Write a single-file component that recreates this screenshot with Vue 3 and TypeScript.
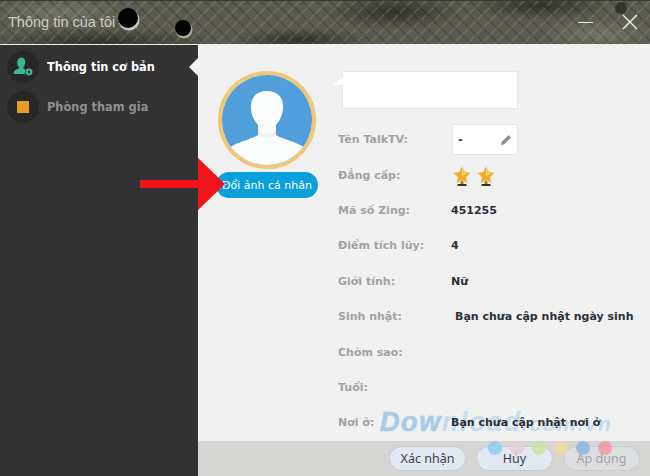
<template>
  <div class="win">
    <header class="titlebar">
      <svg class="plate" width="650" height="44" aria-hidden="true">
        <defs>
          <pattern id="tread" width="14" height="14" patternUnits="userSpaceOnUse">
            <path d="M1 6 L6 1 M8 13 L13 8" stroke="#a8a898" stroke-width="1.1" opacity=".3" />
            <path d="M8 1 L13 6 M1 8 L6 13" stroke="#22221d" stroke-width="1.1" opacity=".36" />
          </pattern>
          <radialGradient id="grime" cx=".5" cy=".5" r=".5">
            <stop offset="0" stop-color="#20201b" stop-opacity=".7" />
            <stop offset="1" stop-color="#20201b" stop-opacity="0" />
          </radialGradient>
          <radialGradient id="wear" cx=".5" cy=".5" r=".5">
            <stop offset="0" stop-color="#8a8a7a" stop-opacity=".55" />
            <stop offset="1" stop-color="#8a8a7a" stop-opacity="0" />
          </radialGradient>
        </defs>
        <rect width="650" height="44" fill="#5b5b4f" />
        <ellipse cx="395" cy="12" rx="70" ry="18" fill="url(#grime)" />
        <ellipse cx="100" cy="42" rx="120" ry="14" fill="url(#grime)" />
        <ellipse cx="300" cy="40" rx="70" ry="12" fill="url(#grime)" />
        <ellipse cx="540" cy="6" rx="70" ry="14" fill="url(#grime)" />
        <ellipse cx="60" cy="12" rx="70" ry="14" fill="url(#wear)" />
        <ellipse cx="600" cy="34" rx="60" ry="16" fill="url(#wear)" />
        <rect width="650" height="44" fill="url(#tread)" />
        <rect width="650" height="1" fill="#2e3a3c" />
        <circle cx="129" cy="20" r="10.5" fill="#e2e2d8" opacity=".8" />
        <circle cx="128" cy="18" r="10" fill="#050505" />
        <circle cx="184" cy="30" r="8.5" fill="#d0d0c4" opacity=".7" />
        <circle cx="183" cy="28" r="8" fill="#050505" />
        <circle cx="621" cy="8" r="6" fill="#33332e" />
      </svg>
      <span class="title">Thông tin của tôi</span>
      <span class="min"></span>
      <svg class="close" width="16" height="16" viewBox="0 0 16 16" aria-hidden="true">
        <path d="M1 1 L15 15 M15 1 L1 15" stroke="#f4f4f4" stroke-width="1.4" fill="none" />
      </svg>
    </header>

    <div class="body">
      <aside class="side">
        <div v-for="item in menu" :key="item.label" class="menu-item" :class="{ active: item.active }">
          <span class="menu-icon">
            <svg v-if="item.active" width="22" height="22" viewBox="0 0 22 22" aria-hidden="true">
              <path d="M7 11 C5.2 9.5 5 7 5.4 5 C5.9 2.7 7.6 1.6 9.4 1.6 C11.4 1.6 13 3 13.2 5.2 C13.4 7.4 12.8 9.6 11.4 11 L11.6 12.6 L14 14 C12.8 15 12.6 16.6 13.2 18 L1.6 18 C1.6 15.4 3 13.6 6.6 12.6 Z" fill="#3fb597" />
              <circle cx="17" cy="16" r="2.4" fill="none" stroke="#3fb597" stroke-width="2" />
            </svg>
            <span v-else class="square"></span>
          </span>
          <span class="menu-label">{{ item.label }}</span>
        </div>
      </aside>

      <div class="main">
        <section class="content">
          <div class="avatar-col">
            <div class="avatar">
              <svg width="90" height="90" viewBox="0 0 90 90" aria-hidden="true">
                <rect width="90" height="90" fill="#509fdb" />
                <path d="M36 50 C31 44 28.5 38 29 30 C29.5 21 36 16 45 16 C54 16 60.5 21 61 30 C61.5 38 59 44 54 50 L54 60 C60 64 72 66 82 72 L82 90 L8 90 L8 72 C18 66 30 64 36 60 Z" fill="#fbfcfc" />
                <path d="M36 55 C41 60 49 60 54 55 L54 61 C49 63 41 63 36 61 Z" fill="#eef1f3" />
              </svg>
            </div>
            <button type="button" class="change-btn">Đổi ảnh cá nhân</button>
          </div>

          <div class="form">
            <div class="bubble"></div>
            <div v-for="row in rows" :key="row.label" class="row">
              <span class="label">{{ row.label }}</span>
              <div v-if="row.kind === 'input'" class="name-box">
                <span>-</span>
                <svg width="12" height="12" viewBox="0 0 12 12" aria-hidden="true">
                  <path d="M1 11 L1.6 8 L8.6 1 L11 3.4 L4 10.4 Z" fill="#8e8e8e" />
                </svg>
              </div>
              <div v-else-if="row.kind === 'stars'" class="stars">
                <svg v-for="n in 2" :key="n" width="18" height="21" viewBox="0 0 18 21" aria-hidden="true">
                  <path d="M7.6 14 L10.4 14 L10.6 18 L7.4 18 Z" fill="#a8842c" />
                  <path d="M4.5 18 L13.5 18 L13.5 20 L4.5 20 Z" fill="#3a3018" />
                  <path d="M9 0.5 L11.6 6 L17.6 6.8 L13.2 11 L14.4 17 L9 14 L3.6 17 L4.8 11 L0.4 6.8 L6.4 6 Z" fill="#f5ac22" stroke="#e8dfa8" stroke-width=".8" />
                  <path d="M9 3 L10.6 7 L14 7.6 L9 10 Z" fill="#ffe27a" />
                </svg>
              </div>
              <span v-else class="value" :class="{ shifted: row.shifted }">{{ row.value }}</span>
            </div>
          </div>
        </section>

        <footer class="actions">
          <button type="button" class="btn">Xác nhận</button>
          <button type="button" class="btn">Hủy</button>
          <button type="button" class="btn disabled">Áp dụng</button>
        </footer>
      </div>
    </div>

    <!-- annotation and watermark lie over the app -->
    <svg class="arrow" width="88" height="52" viewBox="0 0 88 52" aria-hidden="true">
      <path d="M0 22 L58 22 L58 0 L85 26 L58 52 L58 30 L0 30 Z" fill="#f01318" />
    </svg>
    <div class="watermark"><span class="wm-a">Dow</span><span class="wm-b">nload</span><span class="wm-c">.com.vn</span></div>
    <div class="dots">
      <i v-for="c in dots" :key="c" :style="{ background: c }"></i>
    </div>
  </div>
</template>

<script setup lang="ts">
type Row = {
  label: string
  kind?: 'input' | 'stars'
  value?: string
  shifted?: boolean
}

const menu = [
  { label: 'Thông tin cơ bản', active: true },
  { label: 'Phòng tham gia', active: false },
]

const rows: Row[] = [
  { label: 'Tên TalkTV:', kind: 'input' },
  { label: 'Đẳng cấp:', kind: 'stars' },
  { label: 'Mã số Zing:', value: '451255' },
  { label: 'Điểm tích lũy:', value: '4' },
  { label: 'Giới tính:', value: 'Nữ' },
  { label: 'Sinh nhật:', value: 'Bạn chưa cập nhật ngày sinh', shifted: true },
  { label: 'Chòm sao:' },
  { label: 'Tuổi:' },
  { label: 'Nơi ở:', value: 'Bạn chưa cập nhật nơi ở' },
]

const dots = ['#8fcdf0', '#e6cfd2', '#cfe0a8', '#f3d9a0', '#8fb6e0', '#ee9aa0']
</script>

<style>
html,
body {
  margin: 0;
  overflow: hidden;
}
</style>

<style scoped>
.win {
  position: relative;
  width: 650px;
  height: 476px;
  display: flex;
  flex-direction: column;
  overflow: hidden;
  font-family: "DejaVu Sans", "Liberation Sans", sans-serif;
  font-size: 11.4px;
  background: #f1f1f1;
}
.titlebar {
  position: relative;
  flex: 0 0 44px;
  display: flex;
  align-items: center;
  padding: 0 12px 0 8px;
  overflow: hidden;
}
.plate {
  position: absolute;
  inset: 0;
}
.title {
  position: relative;
  font-family: "Liberation Sans", Arial, sans-serif;
  font-size: 14.5px;
  color: #cfcfc6;
}
.min {
  position: relative;
  margin-left: auto;
  margin-right: 29px;
  width: 15px;
  height: 1px;
  background: #e8e8e8;
}
.close {
  position: relative;
  flex: none;
}
.body {
  flex: 1;
  display: flex;
  min-height: 0;
  border-top: 1px solid #f1f1f1;
}
.side {
  flex: 0 0 198px;
  display: flex;
  flex-direction: column;
  gap: 8px;
  padding: 6px 0 0 7px;
  box-sizing: border-box;
  background: #323232;
}
.menu-item {
  position: relative;
  display: flex;
  align-items: center;
  gap: 8px;
  height: 32px;
}
.menu-item.active::after {
  content: "";
  position: absolute;
  right: 0;
  top: 7px;
  border: 9px solid transparent;
  border-left-width: 0;
  border-right: 9px solid #f1f1f1;
}
.menu-icon {
  flex: none;
  width: 32px;
  height: 32px;
  border-radius: 50%;
  background: #272727;
  display: flex;
  align-items: center;
  justify-content: center;
}
.square {
  width: 12px;
  height: 12px;
  background: #e89a2c;
}
.menu-label {
  font-weight: 700;
  color: #8f8f8f;
}
.active .menu-label {
  color: #fff;
}
.main {
  flex: 1;
  min-width: 0;
  display: flex;
  flex-direction: column;
}
.content {
  flex: 1;
  min-height: 0;
  display: flex;
  overflow: hidden;
}
.avatar-col {
  flex: 0 0 138px;
  display: flex;
  flex-direction: column;
  align-items: center;
  gap: 3px;
  padding: 26px 0 0 0;
  box-sizing: border-box;
}
.avatar {
  width: 90px;
  height: 90px;
  border: 4px solid #f0c874;
  border-radius: 50%;
  overflow: hidden;
}
.avatar svg {
  display: block;
}
.change-btn {
  flex: none;
  width: 102px;
  height: 26px;
  padding: 0;
  border: 0;
  border-radius: 13px;
  background: #0ba0dc;
  color: #fff;
  font: 11px "DejaVu Sans", "Liberation Sans", sans-serif;
  white-space: nowrap;
}
.form {
  flex: 1;
  padding: 26px 0 0 2px;
}
.bubble {
  position: relative;
  box-sizing: border-box;
  width: 176px;
  height: 38px;
  margin: 0 0 13px 4px;
  background: #fff;
  border: 1px solid #e6e6e6;
}
.bubble::before {
  content: "";
  position: absolute;
  left: -11px;
  top: 5px;
  border-style: solid;
  border-width: 0 0 8px 11px;
  border-color: transparent transparent #fff transparent;
}
.row {
  display: flex;
  align-items: center;
  height: 35.4px;
}
.label {
  flex: 0 0 113px;
  font-weight: 700;
  color: #a2a2a2;
  font-size: 11px;
}
.value {
  position: relative;
  z-index: 2;
  font-weight: 700;
  color: #2a2f36;
  font-size: 11px;
  white-space: nowrap;
}
.value.shifted {
  margin-left: 4px;
}
.name-box {
  flex: none;
  width: 66px;
  height: 31px;
  margin-left: 1px;
  box-sizing: border-box;
  padding: 0 5px;
  background: #fff;
  border: 1px solid #e6e6e6;
  display: flex;
  align-items: center;
  justify-content: space-between;
  font-weight: 700;
  color: #444;
}
.stars {
  display: flex;
  gap: 6px;
  margin: 3px 0 0 2px;
}
.actions {
  flex: 0 0 35px;
  display: flex;
  align-items: center;
  justify-content: flex-end;
  gap: 10px;
  padding-right: 10px;
  background: #d6d6d4;
}
.btn {
  width: 77px;
  height: 25px;
  padding: 0;
  font: 12.5px "Noto Sans", "Liberation Sans", sans-serif;
  color: #3c4048;
  background: #e3e8f2;
  border: 1px solid #c9ccd0;
  border-radius: 13px;
}
.btn.disabled {
  color: #9fa3a8;
  background: #dcdee0;
}
.arrow {
  position: absolute;
  left: 140px;
  top: 158px;
}
.watermark {
  position: absolute;
  z-index: 1;
  left: 380px;
  top: 407px;
  font: italic 700 27px "Liberation Sans", Arial, sans-serif;
  letter-spacing: 1.6px;
  white-space: nowrap;
}
.wm-a {
  color: #a9cde6;
  -webkit-text-stroke: 0.7px #a9cde6;
}
.wm-b {
  color: #c4dded;
}
.wm-c {
  font-size: 21px;
  color: #c4dded;
}
.dots {
  position: absolute;
  left: 488px;
  top: 441px;
  display: flex;
  gap: 8px;
}
.dots i {
  width: 14px;
  height: 14px;
  border-radius: 50%;
  opacity: .85;
}
</style>
